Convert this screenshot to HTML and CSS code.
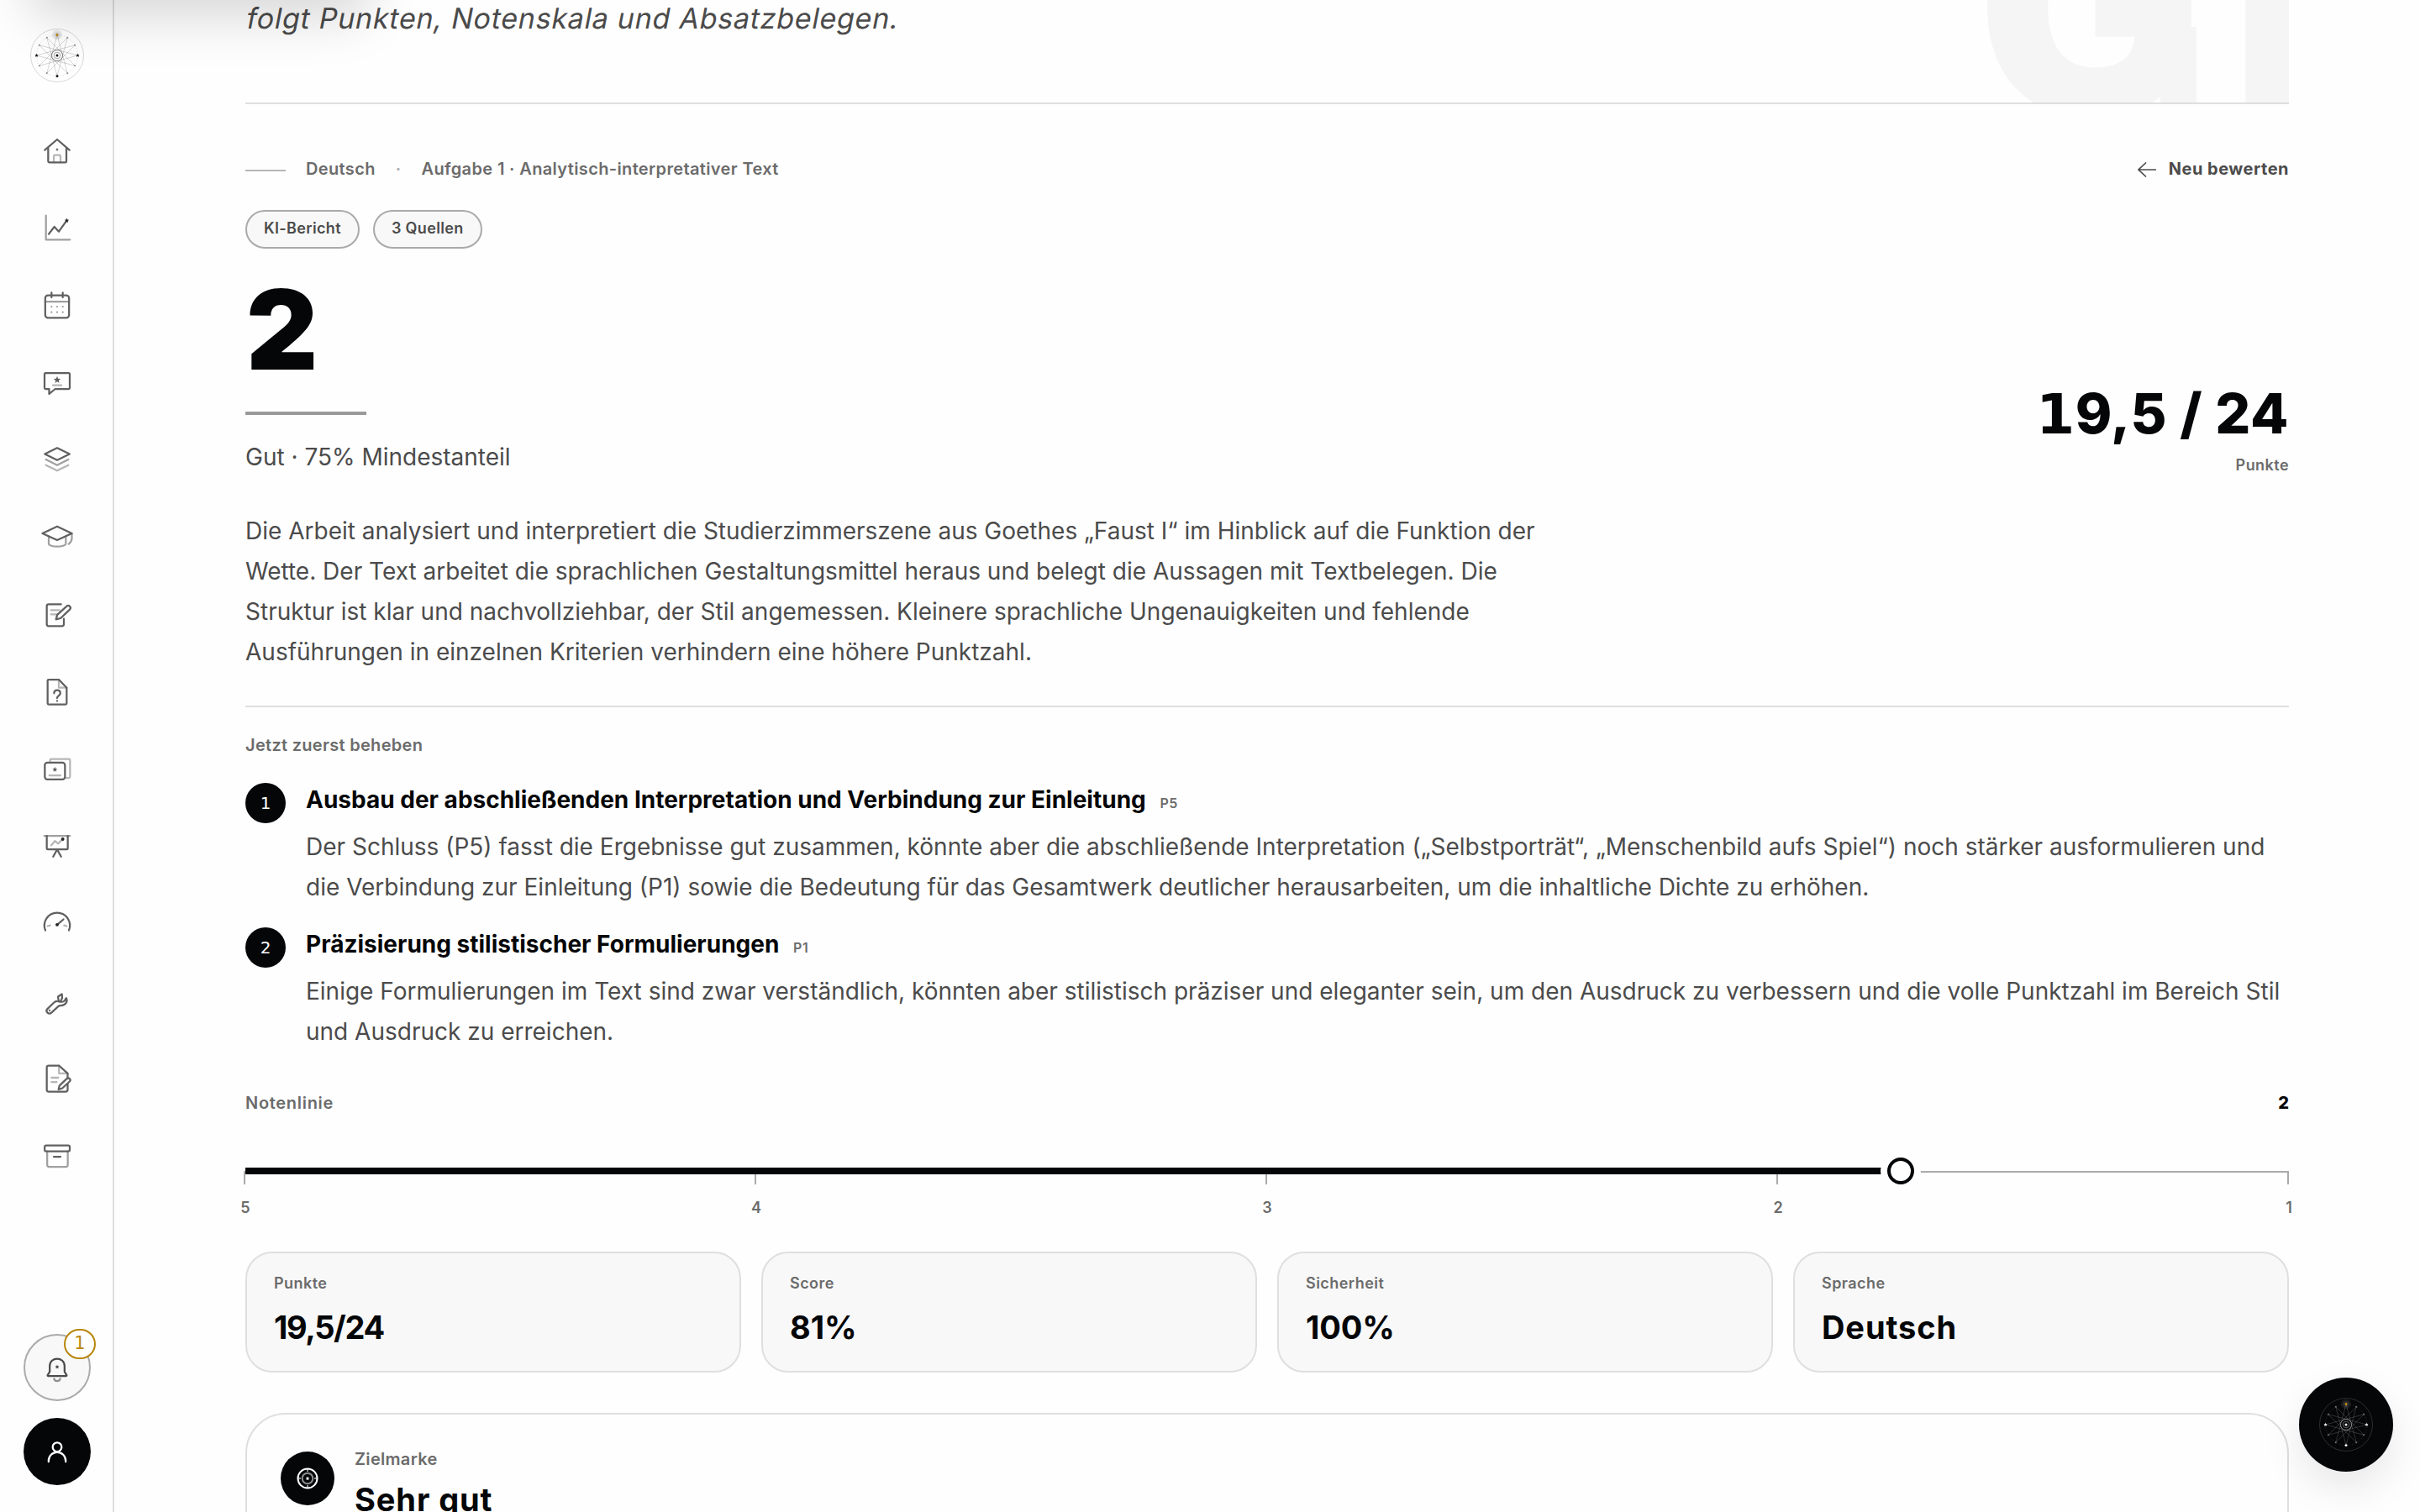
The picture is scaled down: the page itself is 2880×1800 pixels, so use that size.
FILE: index.html
```html
<!DOCTYPE html>
<html lang="de">
<head>
    <meta charset="UTF-8">
    <meta name="viewport" content="width=device-width, initial-scale=1.0">
    <title>KI-Bericht</title>
    <link rel="stylesheet" href="styles.css">
</head>
<body>

    <svg class="defs" width="0" height="0">
        <symbol id="star" viewBox="0 0 10 10">
            <path d="M5 0l1.3 3.4 3.6.2-2.8 2.3.9 3.5L5 7.5 2 9.4l.9-3.5L.1 3.6l3.6-.2z" fill="currentColor"/>
        </symbol>
        <symbol id="emblem" viewBox="0 0 64 64">
            <g fill="none" stroke="currentColor">
                <circle class="ring" cx="32" cy="32" r="31.5"/>
                <circle class="ring" cx="32" cy="32" r="24.5" stroke-dasharray="1 2"/>
                <path class="rays" d="M32 7.5L44.25 53.2 10.8 19.75 56.5 32 10.8 44.25 44.25 10.8 32 56.5 19.75 10.8 53.2 44.25 7.5 32 53.2 19.75 19.75 53.2z"/>
                <circle class="hub" cx="32" cy="32" r="6.5"/>
                <circle class="hub" cx="32" cy="32" r="3.8"/>
            </g>
            <g class="dots" fill="currentColor">
                <circle cx="44.25" cy="10.8" r="1"/><circle cx="53.2" cy="19.75" r="1"/>
                <circle cx="53.2" cy="44.25" r="1"/><circle cx="44.25" cy="53.2" r="1"/>
                <circle cx="19.75" cy="53.2" r="1"/><circle cx="10.8" cy="44.25" r="1"/>
                <circle cx="10.8" cy="19.75" r="1"/><circle cx="19.75" cy="10.8" r="1"/>
            </g>
            <circle cx="32" cy="32" r="1.5" fill="currentColor"/>
            <use href="#star" x="5.3" y="29.8" width="4.4" height="4.4"/>
            <use href="#star" x="54.3" y="29.8" width="4.4" height="4.4"/>
            <use href="#star" x="29.8" y="54.3" width="4.4" height="4.4"/>
            <circle class="halo" cx="32" cy="7.5" r="6" fill="currentColor"/>
            <circle class="halo" cx="32" cy="7.5" r="3.6" fill="currentColor"/>
            <rect x="30.8" y="6" width="2.4" height="3" fill="#b8860b"/>
        </symbol>
    </svg>

    <aside class="sidebar">
        <svg class="logo"><use href="#emblem"/></svg>

        <nav class="nav">
            <a class="nav-item"><svg class="icon" viewBox="0 0 24 24"><path d="M3.2 11.2L12 3.6l8.8 7.6M5.6 9.2v10c0 .5.3.8.8.8h11.3c.5 0 .9-.3.9-.8v-10"/><path class="light" d="M9.6 20v-4.4c0-.5.3-.8.8-.8h3.2c.5 0 .8.3.8.8V20"/><use href="#star" x="10.8" y="9.6" width="2.4" height="2.4"/></svg></a>
            <a class="nav-item"><svg class="icon" viewBox="0 0 24 24"><path class="mid" d="M4 2.8V20h17.2"/><path d="M6 16l4-5.2 3.2 3.4 5.6-7.8"/><use class="dark" href="#star" x="17.2" y="4.6" width="3.4" height="3.4"/></svg></a>
            <a class="nav-item"><svg class="icon" viewBox="0 0 24 24"><rect x="3.5" y="4.6" width="17" height="16" rx="2"/><path d="M8 2.6V6M16 2.6V6"/><path class="mid" d="M3.5 9h17"/><path class="mid" d="M8 12.6h.01M12 12.6h.01M16 12.6h.01M8 16.6h.01M12 16.6h.01M16 16.6h.01"/></svg></a>
            <a class="nav-item"><svg class="icon" viewBox="0 0 24 24"><path d="M3.8 4.8h16.4c.5 0 .8.3.8.8v9.8c0 .5-.3.8-.8.8h-9.6l-4.3 3.6v-3.6H3.8c-.5 0-.8-.3-.8-.8V5.6c0-.5.3-.8.8-.8z"/><path class="light" d="M9 13.6h6"/><use href="#star" x="9.4" y="7.1" width="5.2" height="5.2"/></svg></a>
            <a class="nav-item"><svg class="icon" viewBox="0 0 24 24"><path d="M3.2 7.5L12 3.2l8.9 4.3-8.9 4.3z"/><path class="mid" d="M4 11.4l8 4 8-4"/><path class="light" d="M4 15.4l8 4 8-4"/></svg></a>
            <a class="nav-item"><svg class="icon" viewBox="0 0 24 24"><path d="M1.5 9L12 4l10.5 5L12 13.8z"/><path class="mid" d="M6 11v5.4c0 1.2 3 2 6 2s6.2-.8 6.2-2V11M22.5 9v3.4c0 1.6-.8 3-2.2 4.2"/></svg></a>
            <a class="nav-item"><svg class="icon" viewBox="0 0 24 24"><path d="M14.8 4.4H6c-.8 0-1.4.6-1.4 1.4v12.8c0 .8.6 1.4 1.4 1.4h9.4c.8 0 1.4-.6 1.4-1.4v-3.8"/><path d="M11.2 15.2l.9-3.3 6.6-6a1.6 1.6 0 0 1 2.3 2.3l-6.5 6.2z"/><path class="light" d="M7.6 8.6h6M7.6 11.6h4"/></svg></a>
            <a class="nav-item"><svg class="icon" viewBox="0 0 24 24"><path d="M13.2 3H6c-.5 0-.8.3-.8.8V20c0 .5.3.8.8.8h12c.5 0 .8-.3.8-.8V8.8z"/><path class="light" d="M13.2 3v5.8h5.6"/><path d="M9.8 12.8c0-2.9 4.500-2.9 4.500 0 0 1.7-2.300 1.6-2.300 3.4M12 18.2v.1"/></svg></a>
            <a class="nav-item"><svg class="icon" viewBox="0 0 24 24"><path class="light" d="M7 6.5V5.4c0-.5.3-.8.8-.8h12.6c.5 0 .8.3.8.8v11.8c0 .5-.3.8-.8.8h-2"/><rect x="3.2" y="7.1" width="14.4" height="12" rx="1.8"/><path class="light" d="M6.4 16.2h8"/><use href="#star" x="8.5" y="10.1" width="3.8" height="3.8"/></svg></a>
            <a class="nav-item"><svg class="icon" viewBox="0 0 24 24"><path class="mid" d="M2.8 4.2h18.4"/><path d="M4.6 4.2v9c0 .4.3.7.7.7h13.6c.4 0 .7-.3.7-.7v-9M12 13.9l-2.8 5.2M12 13.9l2.8 5.2"/><path class="light" d="M7.8 11l2.6-3.1 2.4 1.9L16 6.4"/><circle class="solid" cx="16" cy="6.6" r=".5"/></svg></a>
            <a class="nav-item"><svg class="icon" viewBox="0 0 24 24"><path d="M3.6 16.5a9.1 9.1 0 1 1 16.8 0"/><path d="M12 12.5l4.5-3.8"/><path class="light" d="M5.2 13.5L7 13M17 13l1.8.5"/><circle class="solid" cx="12" cy="12.5" r=".5"/></svg></a>
            <a class="nav-item"><svg class="icon" viewBox="0 0 24 24"><path d="M4.9 17.6l4.5-4.4c.9-.9 1.7-1.3 2.8-1.2 1.6.1 3.1.7 4.3.2 1.1-.5 1.2-1.6 2-2.5.6 1.2.6 2.4-.1 3.4-1 1.5-2.2 2-3.7 2-1 0-1.5.1-2.1.7l-4.7 4.4c-1.9 1.5-4.5-.8-3-2.6z"/><path d="M12.6 8.7l2.8-1.9.2 3-1.2 2.2h-1.3zM6.6 18.5v.1"/></svg></a>
            <a class="nav-item"><svg class="icon" viewBox="0 0 24 24"><path d="M19.5 12V8.3l-6.2-5.6H6c-.8 0-1.4.6-1.4 1.4v15.8c0 .8.6 1.4 1.4 1.4h12.1c.8 0 1.4-.6 1.4-1.4v-4"/><path class="light" d="M13.3 2.7v5.6h6.2M8 11.4h4.8M8 14.5h3.6"/><path d="M13 19.8l.7-2.8 5.2-4.9a1.4 1.4 0 0 1 2 2l-5.2 4.8z"/></svg></a>
            <a class="nav-item"><svg class="icon" viewBox="0 0 24 24"><rect x="3.1" y="4.5" width="17.9" height="4.3" rx="1.1"/><path class="mid" d="M4.9 8.8v9.6c0 .8.6 1.4 1.4 1.4h11.9c.8 0 1.4-.6 1.4-1.4V8.8"/><path d="M9.6 12.6h4.8"/></svg></a>
        </nav>

        <div class="sidebar-foot">
            <a class="round bell">
                <svg class="icon" viewBox="0 0 24 24"><path d="M6.7 15v-4c0-7 10.6-7 10.6 0v4l1.5 2.5c.1.3 0 .5-.3.5h-13c-.3 0-.4-.2-.3-.5z"/><path class="mid" d="M9.8 20c.6 2.2 3.8 2.2 4.4 0"/><use href="#star" x="10.4" y="9.9" width="3.2" height="3.2"/></svg>
                <span class="badge">1</span>
            </a>
            <a class="round avatar">
                <svg class="icon" viewBox="0 0 24 24"><circle cx="12" cy="8.8" r="3.2"/><path d="M5.9 19.3v-.7a6.1 6.1 0 0 1 12.2 0v.7"/></svg>
            </a>
        </div>
    </aside>

    <main class="main">
        <header class="hero">
            <p class="tagline">folgt Punkten, Notenskala und Absatzbelegen.</p>
            <span class="ghost">GI</span>
        </header>

        <div class="crumbs">
            <span class="dash"></span>
            <span>Deutsch</span>
            <span class="sep">·</span>
            <span>Aufgabe 1 · Analytisch-interpretativer Text</span>
            <a class="back">
                <svg width="22" height="18" viewBox="0 0 22 18"><path d="M1 9h20.500M9.500 1L1 9l8.500 8"/></svg>
                Neu bewerten
            </a>
        </div>

        <div class="pills">
            <span class="pill">KI-Bericht</span>
            <span class="pill">3 Quellen</span>
        </div>

        <section class="grade">
            <div>
                <div class="grade-num">2</div>
                <div class="grade-rule"></div>
                <p class="grade-text">Gut · 75% Mindestanteil</p>
            </div>
            <div class="points">
                <div class="points-num"><span class="one">1</span>9,5 / 24</div>
                <div class="label small">Punkte</div>
            </div>
        </section>

        <p class="summary">Die Arbeit analysiert und interpretiert die Studierzimmerszene aus Goethes „Faust I“ im Hinblick auf die Funktion der Wette. Der Text arbeitet die sprachlichen Gestaltungsmittel heraus und belegt die Aussagen mit Textbelegen. Die Struktur ist klar und nachvollziehbar, der Stil angemessen. Kleinere sprachliche Ungenauigkeiten und fehlende Ausführungen in einzelnen Kriterien verhindern eine höhere Punktzahl.</p>

        <section class="fixes">
            <h2 class="label">Jetzt zuerst beheben</h2>
            <div class="fix">
                <span class="fix-num">1</span>
                <div>
                    <h3 class="fix-title">Ausbau der abschließenden Interpretation und Verbindung zur Einleitung <span class="ref">P5</span></h3>
                    <p class="fix-text">Der Schluss (P5) fasst die Ergebnisse gut zusammen, könnte aber die abschließende Interpretation („Selbstporträt“, „Menschenbild aufs Spiel“) noch stärker ausformulieren und die Verbindung zur Einleitung (P1) sowie die Bedeutung für das Gesamtwerk deutlicher herausarbeiten, um die inhaltliche Dichte zu erhöhen.</p>
                </div>
            </div>
            <div class="fix">
                <span class="fix-num">2</span>
                <div>
                    <h3 class="fix-title">Präzisierung stilistischer Formulierungen <span class="ref">P1</span></h3>
                    <p class="fix-text">Einige Formulierungen im Text sind zwar verständlich, könnten aber stilistisch präziser und eleganter sein, um den Ausdruck zu verbessern und die volle Punktzahl im Bereich Stil und Ausdruck zu erreichen.</p>
                </div>
            </div>
        </section>

        <section class="scale">
            <div class="scale-head">
                <span class="label wide">Notenlinie</span>
                <span class="scale-grade">2</span>
            </div>
            <div class="track">
                <div class="fill" style="width: 81%"></div>
                <div class="knob" style="left: 81%"></div>
            </div>
            <div class="ticks"><i></i><i></i><i></i><i></i><i></i></div>
            <div class="tick-labels"><span>5</span><span>4</span><span>3</span><span>2</span><span>1</span></div>
        </section>

        <section class="stats">
            <div class="stat"><div class="label small">Punkte</div><div class="value num">19,5/24</div></div>
            <div class="stat"><div class="label small">Score</div><div class="value pct">81%</div></div>
            <div class="stat"><div class="label small">Sicherheit</div><div class="value pct">100%</div></div>
            <div class="stat"><div class="label small">Sprache</div><div class="value">Deutsch</div></div>
        </section>

        <section class="target">
            <span class="target-icon">
                <svg width="28" height="28" viewBox="0 0 28 28"><circle cx="14" cy="14" r="11.500"/><circle class="inner" cx="14" cy="14" r="6.300"/><path class="inner" d="M14 3v3M14 22v3M3 14h3M22 14h3"/><use href="#star" x="11.500" y="11.500" width="5" height="5"/></svg>
            </span>
            <div>
                <div class="label">Zielmarke</div>
                <div class="value">Sehr gut</div>
            </div>
        </section>
    </main>

    <div class="popover"></div>
    <a class="fab"><svg class="logo"><use href="#emblem"/></svg></a>

</body>
</html>
```
FILE: styles.css
```css
* {
    box-sizing: border-box;
    margin: 0;
    padding: 0;
}

body {
    display: flex;
    height: 1800px;
    overflow: hidden;
    background: #fefefe;
    color: #050608;
    font-family: Inter, "Liberation Sans", sans-serif;
    font-size: 28px;
}

.defs {
    position: absolute;
}

/* sidebar */
.sidebar {
    display: flex;
    flex-direction: column;
    align-items: center;
    width: 136px;
    height: 1800px;
    padding: 34px 0 32px;
    border-right: 2px solid #dfdfdf;
}

.logo {
    width: 64px;
    height: 64px;
    margin-left: 2px;
}

.ring {
    stroke-width: .8;
    opacity: .2;
}

.rays {
    stroke-width: .6;
    opacity: .28;
}

.hub {
    stroke-width: .9;
    opacity: .4;
}

.dots {
    opacity: .4;
}

.halo {
    opacity: .08;
}

.nav {
    margin: 36px 0 0 2px;
}

.nav-item {
    display: flex;
    align-items: center;
    justify-content: center;
    height: 92px;
    color: #606060;
}

.icon {
    width: 40px;
    height: 40px;
    fill: none;
    stroke: currentColor;
    stroke-width: 1.35;
    stroke-linecap: round;
    stroke-linejoin: round;
}

.icon use {
    stroke: none;
}

.icon .mid {
    opacity: .6;
}

.icon .light {
    opacity: .45;
}

.icon .dark {
    color: #222;
}

.icon .solid {
    fill: #222;
    stroke: #222;
}

.sidebar-foot {
    display: flex;
    flex-direction: column;
    gap: 20px;
    margin: auto 0 0 2px;
}

.round {
    position: relative;
    display: flex;
    align-items: center;
    justify-content: center;
    width: 80px;
    height: 80px;
    border-radius: 50%;
}

.bell {
    border: 2px solid #aaa;
    background: #f8f8f8;
    color: #4b4b4b;
}

.avatar {
    background: #050608;
    color: #fff;
}

.badge {
    position: absolute;
    top: -8px;
    right: -8px;
    width: 38px;
    height: 36px;
    border: 2px solid #b8860b;
    border-radius: 19px;
    background: #fff;
    color: #b8860b;
    font: 21px/31px "DejaVu Sans", sans-serif;
    text-align: center;
}

/* main column */
.main {
    flex: 1;
    height: 1800px;
    padding: 0 156px;
    overflow: hidden;
}

.hero {
    position: relative;
    height: 124px;
    border-bottom: 2px solid #dfdfdf;
    overflow: hidden;
}

.tagline {
    margin: -4px 0 0 2px;
    color: #4b4b4b;
    font-size: 34px;
    line-height: 52px;
    letter-spacing: .76px;
    transform: skewX(-11deg);
}

.ghost {
    position: absolute;
    top: -168px;
    left: 2061px;
    color: #f5f5f5;
    font-size: 355px;
    font-weight: 900;
    line-height: 1;
    letter-spacing: 35px;
}

/* spur of the G */
.ghost::after {
    content: "";
    position: absolute;
    top: 200px;
    left: 218px;
    width: 43px;
    height: 100px;
    background: #f5f5f5;
}

.label {
    color: #6b6b6b;
    font-size: 20px;
    font-weight: 600;
    line-height: 28px;
    letter-spacing: .3px;
}

.label.small {
    font-size: 18px;
    line-height: 24px;
    letter-spacing: .45px;
}

.label.wide {
    letter-spacing: .7px;
}

.crumbs {
    display: flex;
    align-items: center;
    height: 30px;
    margin-top: 62px;
    color: #6b6b6b;
    font-size: 20px;
    font-weight: 600;
    line-height: 28px;
    letter-spacing: .36px;
}

.dash {
    width: 48px;
    height: 2px;
    margin: 4px 24px 0 0;
    background: #b5b5b5;
}

.sep {
    margin: 0 24px;
    color: #aaa;
}

.back {
    display: flex;
    align-items: center;
    gap: 15px;
    margin-left: auto;
    color: #4b4b4b;
    font-weight: 700;
    letter-spacing: .5px;
}

.back svg {
    margin-top: 2px;
    fill: none;
    stroke: currentColor;
    stroke-width: 1.7;
    stroke-linecap: round;
}

.pills {
    display: flex;
    gap: 16px;
    margin-top: 34px;
}

.pill {
    height: 46px;
    padding: 0 20px;
    border: 2px solid #aaa;
    border-radius: 23px;
    background: #f8f8f8;
    color: #4b4b4b;
    font-size: 18px;
    font-weight: 600;
    line-height: 39px;
    letter-spacing: .35px;
}

.grade {
    display: flex;
    align-items: flex-end;
    justify-content: space-between;
    margin-top: 30px;
}

.grade-num {
    padding-left: 1px;
    font-size: 132px;
    font-weight: 900;
    line-height: 132px;
}

.grade-rule {
    width: 144px;
    height: 4px;
    margin: 32px 0 30px;
    background: #999;
}

.grade-text {
    color: #4b4b4b;
    line-height: 40px;
}

.points {
    margin-bottom: -2px;
    text-align: right;
}

.points-num {
    margin-bottom: 15px;
    font-size: 66px;
    font-weight: 800;
    line-height: 66px;
    letter-spacing: .6px;
}

.one {
    font-family: "DejaVu Sans", sans-serif;
    line-height: 1;
}

.summary {
    width: 1560px;
    margin-top: 44px;
    color: #4b4b4b;
    line-height: 48px;
}

/* things to fix first */
.fixes {
    display: flex;
    flex-direction: column;
    gap: 20px;
    margin-top: 40px;
    padding-top: 31px;
    border-top: 2px solid #dfdfdf;
}

.fixes .label {
    margin-bottom: 7px;
}

.fix {
    display: grid;
    grid-template-columns: 48px 1fr;
    gap: 24px;
}

.fix-num {
    height: 48px;
    margin-top: 4px;
    border-radius: 50%;
    background: #050608;
    color: #fff;
    font-family: "DejaVu Sans", sans-serif;
    font-size: 20px;
    line-height: 48px;
    text-align: center;
}

.fix-title {
    font-size: 28px;
    font-weight: 700;
    line-height: 48px;
}

.ref {
    margin-left: 10px;
    color: #6b6b6b;
    font-size: 16px;
    font-weight: 600;
    letter-spacing: .6px;
}

.fix-text {
    margin-top: 4px;
    color: #4b4b4b;
    line-height: 48px;
}

/* grade line */
.scale {
    margin-top: 47px;
}

.scale-head {
    display: flex;
    justify-content: space-between;
    line-height: 28px;
}

.scale-grade {
    font-size: 20px;
    font-weight: 800;
}

.track {
    position: relative;
    height: 8px;
    margin-top: 63px;
    background: linear-gradient(#aaa, #aaa) 0 4px / 100% 2px no-repeat;
}

.fill {
    position: relative;
    z-index: 1;
    height: 8px;
    background: #050608;
}

.knob {
    position: absolute;
    z-index: 2;
    top: -12px;
    width: 32px;
    height: 32px;
    margin-left: -16px;
    border: 4px solid #050608;
    border-radius: 50%;
    background: #fefefe;
    box-shadow: 0 0 0 8px #fefefe;
}

.ticks {
    display: flex;
    justify-content: space-between;
    margin: -4px 0 0 -2px;
}

.ticks i {
    width: 2px;
    height: 16px;
    background: #aaa;
}

.tick-labels {
    display: flex;
    justify-content: space-between;
    margin: 16px -12px 0;
    color: #6b6b6b;
    font-size: 18px;
    font-weight: 600;
    line-height: 24px;
    text-align: center;
}

.tick-labels span {
    width: 24px;
}

/* cards */
.stats {
    display: grid;
    grid-template-columns: repeat(4, 1fr);
    gap: 24px;
    margin-top: 40px;
}

.stat {
    height: 144px;
    padding: 24px 32px;
    border: 2px solid #dfdfdf;
    border-radius: 32px;
    background: #f8f8f8;
}

.value {
    font-size: 38px;
    font-weight: 700;
    line-height: 44px;
    letter-spacing: .9px;
}

.value.num {
    letter-spacing: -1.4px;
}

.value.pct {
    letter-spacing: -.1px;
}

.stat .value {
    margin-top: 18px;
}

.target {
    display: flex;
    gap: 24px;
    height: 300px;
    margin-top: 48px;
    padding: 44px 40px;
    border: 2px solid #dfdfdf;
    border-radius: 48px;
}

.target .label {
    margin: -5px 0 12px;
}

.target-icon {
    display: flex;
    align-items: center;
    justify-content: center;
    width: 64px;
    height: 64px;
    border-radius: 50%;
    background: #050608;
    color: #fff;
}

.target-icon svg {
    fill: none;
    stroke: #fff;
    stroke-width: 2;
}

.target-icon .inner {
    opacity: .55;
}

.target-icon use {
    stroke: none;
}

/* closed popover, only its shadow reaches into view */
.popover {
    position: absolute;
    top: -110px;
    left: 32px;
    width: 410px;
    height: 100px;
    border-radius: 32px;
    box-shadow: 0 32px 60px rgba(0, 0, 0, .15);
}

.fab {
    position: absolute;
    right: 32px;
    bottom: 48px;
    display: flex;
    align-items: center;
    justify-content: center;
    width: 112px;
    height: 112px;
    border-radius: 50%;
    background: #050608;
    box-shadow: 0 20px 48px rgba(0, 0, 0, .09);
    color: #fff;
}

.fab .logo {
    margin: 0;
}
```
